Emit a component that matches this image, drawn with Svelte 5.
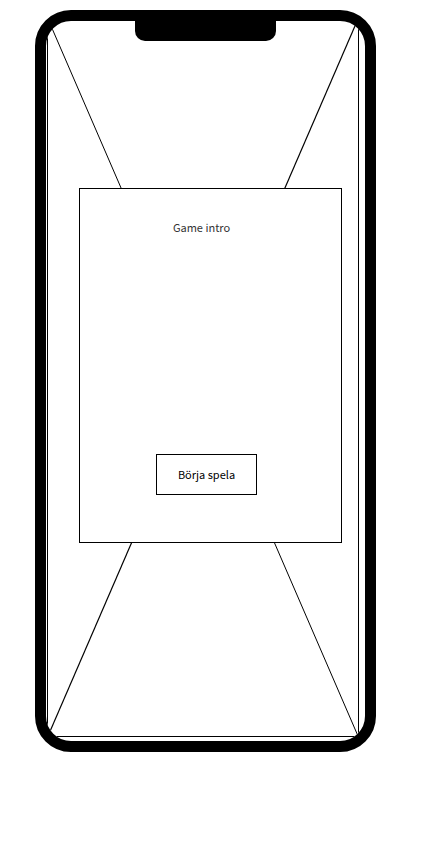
<script>
  let { title = 'Game intro', action = 'Börja spela' } = $props();
</script>

<main class="phone">
  <svg class="backdrop" aria-hidden="true">
    <line x1="0" y1="0" x2="100%" y2="100%" />
    <line class="strong" x1="0" y1="100%" x2="100%" y2="0" />
  </svg>
  <div class="notch"></div>
  <section class="card">
    <p>{title}</p>
    <button type="button">{action}</button>
  </section>
</main>

<style>
  :global(body) {
    background: #fff;
  }

  .phone {
    position: relative;
    box-sizing: border-box;
    margin: 10px 64px 0 35px;
    padding: 167px 23px 198px 33px;
    border: 11px solid #000;
    border-radius: 36px;
    overflow: hidden;
    font-family: 'Noto Sans CJK SC', 'Noto Sans', sans-serif;
    font-size: 11px;
    line-height: 18px;
  }

  .backdrop {
    position: absolute;
    top: -3px;
    left: 1px;
    box-sizing: border-box;
    width: calc(100% - 7px);
    height: calc(100% - 1px);
    border: 1px solid #000;
  }

  .backdrop line {
    stroke: #000;
    stroke-width: 1;
  }

  .backdrop .strong {
    stroke-width: 1.2;
  }

  .notch {
    position: absolute;
    top: 0;
    left: 0;
    right: 0;
    width: 141px;
    height: 20px;
    margin: 0 auto;
    border-radius: 0 0 10px 10px;
    background: #000;
  }

  .card {
    position: relative;
    display: flex;
    flex-direction: column;
    align-items: center;
    justify-content: space-between;
    box-sizing: border-box;
    min-height: 355px;
    padding: 29px 8px 47px 0;
    border: 1px solid #000;
    background: #fff;
  }

  p {
    margin: 0;
    padding-right: 10px;
    color: #333;
  }

  button {
    padding: 10px 21px;
    border: 1px solid #000;
    border-radius: 0;
    background: #fff;
    color: #000;
    font: inherit;
    line-height: 19px;
  }
</style>
